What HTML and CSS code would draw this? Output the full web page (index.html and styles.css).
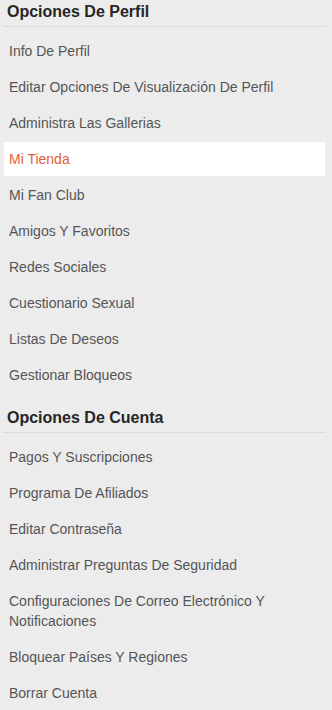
FILE: index.html
```html
<!DOCTYPE html>
<html lang="es">
<head>
<meta charset="utf-8">
<title>Opciones</title>
<link rel="stylesheet" href="styles.css">
</head>
<body>
<nav class="sidebar">
  <section class="group">
    <h2 class="group-title">Opciones De Perfil</h2>
    <ul class="menu">
      <li class="menu-item">Info De Perfil</li>
      <li class="menu-item">Editar Opciones De Visualización De Perfil</li>
      <li class="menu-item">Administra Las Gallerias</li>
      <li class="menu-item active">Mi Tienda</li>
      <li class="menu-item">Mi Fan Club</li>
      <li class="menu-item">Amigos Y Favoritos</li>
      <li class="menu-item">Redes Sociales</li>
      <li class="menu-item">Cuestionario Sexual</li>
      <li class="menu-item">Listas De Deseos</li>
      <li class="menu-item">Gestionar Bloqueos</li>
    </ul>
  </section>
  <section class="group">
    <h2 class="group-title">Opciones De Cuenta</h2>
    <ul class="menu">
      <li class="menu-item">Pagos Y Suscripciones</li>
      <li class="menu-item">Programa De Afiliados</li>
      <li class="menu-item">Editar Contraseña</li>
      <li class="menu-item">Administrar Preguntas De Seguridad</li>
      <li class="menu-item">Configuraciones De Correo Electrónico Y Notificaciones</li>
      <li class="menu-item">Bloquear Países Y Regiones</li>
      <li class="menu-item">Borrar Cuenta</li>
    </ul>
  </section>
</nav>
</body>
</html>
```
FILE: styles.css
```css
html, body {
  margin: 0;
  padding: 0;
  background: #ececec;
}
body {
  font-family: "Liberation Sans", Arial, sans-serif;
  color: #555;
}
.sidebar {
  width: 323px;
  padding: 0 6px 0 3px;
}
.group + .group {
  margin-top: 14px;
}
.group-title {
  margin: 0;
  padding: 2px 4px 4px;
  font-size: 16px;
  line-height: 20px;
  font-weight: bold;
  color: #262626;
  border-bottom: 1px solid #dadada;
}
.menu {
  list-style: none;
  margin: 0;
  padding: 7px 0 0;
  display: flex;
  flex-direction: column;
  gap: 2px;
}
.menu-item {
  margin: 0 1px;
  padding: 7px 5px;
  font-size: 14px;
  line-height: 20px;
  color: #555;
}
.menu-item.active {
  background: #fff;
  color: #df6236;
}
```
